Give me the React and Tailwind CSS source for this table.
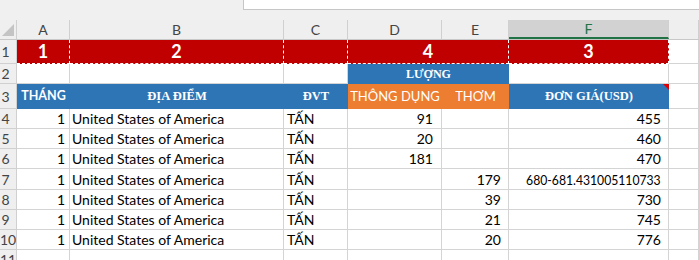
import React from 'react';

const sans = "font-['Lato','Liberation_Sans',sans-serif]";
const serif = "font-['Liberation_Serif','DejaVu_Serif',serif]";
const grid = 'border-r border-b border-[#d4d4d4]';

const cols = ['A', 'B', 'C', 'D', 'E', 'F', ''];

const rows = [
  { n: 4, d: '91', e: '', f: '455', h: 'h-[20px]' },
  { n: 5, d: '20', e: '', f: '460', h: 'h-[20px]' },
  { n: 6, d: '181', e: '', f: '470', h: 'h-[20px]' },
  { n: 7, d: '', e: '179', f: '680-681.431005110733', h: 'h-[21px]', long: true },
  { n: 8, d: '', e: '39', f: '730', h: 'h-[20px]' },
  { n: 9, d: '', e: '21', f: '745', h: 'h-[20px]' },
  { n: 10, d: '', e: '20', f: '776', h: 'h-[20px]' },
];

const RowNum = ({ n, h }) => (
  <div className={`${h} w-[17px] shrink-0 bg-[#efefef] border-r border-b border-[#d0d0d0] flex items-center text-[#444] text-[14px] overflow-hidden`}>
    <span className="w-[11px] text-center">{n}</span>
  </div>
);

export default function App() {
  return (
    <div className={`w-[699px] h-[260px] overflow-hidden bg-white text-[14px] text-black ${sans}`}>
      {/* formula bar strip */}
      <div className="h-[20px] bg-[#f0f0f0] flex">
        <div className="w-[243px]" />
        <div className="flex-1 h-[10px] bg-white border-l border-b border-[#c6c6c6]" />
      </div>

      {/* column headers */}
      <div className="flex h-[20px] bg-[#efefef] border-b border-[#c8c8c8] text-[#444] text-[14px]">
        <div className="w-[17px] border-r border-[#d0d0d0] relative">
          <svg className="absolute left-[2px] top-[4px]" width="12" height="12" viewBox="0 0 12 12">
            <polygon points="12,0 12,12 0,12" fill="#c4c4c4" />
          </svg>
        </div>
        {cols.map((c, i) => {
          const w = ['w-[53px]', 'w-[214px]', 'w-[64px]', 'w-[94px]', 'w-[67px]', 'w-[160px]', 'flex-1'][i];
          const sel = c === 'F';
          return (
            <div
              key={i}
              className={`${w} flex items-center justify-center border-r border-[#d0d0d0] ${sel ? 'bg-[#d2d2d2] text-[#217346] border-b-2 border-b-[#217346]' : ''}`}
            >
              {c}
            </div>
          );
        })}
      </div>

      {/* row 1 */}
      <div className="flex h-[24px]">
        <RowNum n={1} h="h-[24px]" />
        <div className="w-[53px] bg-[#c00000] border-r border-b border-dashed border-white flex items-center justify-center text-white font-bold text-[18px]">1</div>
        <div className="w-[214px] bg-[#c00000] border-r border-b border-dashed border-white flex items-center justify-center text-white font-bold text-[18px]">2</div>
        <div className="w-[64px] bg-[#c00000] border-r border-b border-dashed border-white" />
        <div className="w-[161px] bg-[#c00000] border-r border-b border-dashed border-white flex items-center justify-center text-white font-bold text-[18px]">4</div>
        <div className="w-[160px] bg-[#c00000] border-r border-b border-dashed border-white flex items-center justify-center text-white font-bold text-[18px]">3</div>
        <div className={`flex-1 ${grid}`} />
      </div>

      {/* row 2 */}
      <div className="flex h-[20px]">
        <RowNum n={2} h="h-[20px]" />
        <div className={`w-[53px] ${grid}`} />
        <div className={`w-[214px] ${grid}`} />
        <div className={`w-[64px] ${grid}`} />
        <div className={`w-[161px] bg-[#2e75b6] flex items-center justify-center text-white font-bold text-[12px] ${serif}`}>LƯỢNG</div>
        <div className={`w-[160px] ${grid}`} />
        <div className={`flex-1 ${grid}`} />
      </div>

      {/* row 3 */}
      <div className="flex h-[25px]">
        <RowNum n={3} h="h-[25px]" />
        <div className="w-[53px] bg-[#2e75b6] flex items-center justify-center text-white font-bold text-[12.5px]">THÁNG</div>
        <div className={`w-[214px] bg-[#2e75b6] flex items-center justify-center text-white font-bold text-[12.5px] ${serif}`}>ĐỊA ĐIỂM</div>
        <div className={`w-[64px] bg-[#2e75b6] flex items-center justify-center text-white font-bold text-[12.5px] ${serif}`}>ĐVT</div>
        <div className="w-[94px] bg-[#ed7d31] flex items-center justify-center text-white text-[13px] whitespace-nowrap">THÔNG DỤNG</div>
        <div className="w-[67px] bg-[#ed7d31] flex items-center justify-center text-white text-[13px]">THƠM</div>
        <div className={`w-[160px] bg-[#2e75b6] relative flex items-center justify-center text-white font-bold text-[12.5px] ${serif}`}>
          ĐƠN GIÁ(USD)
          <svg className="absolute right-0 top-0" width="6" height="6" viewBox="0 0 6 6">
            <polygon points="0,0 6,0 6,6" fill="#e00000" />
          </svg>
        </div>
        <div className={`flex-1 ${grid}`} />
      </div>

      {/* data rows */}
      {rows.map((r) => (
        <div key={r.n} className={`flex ${r.h}`}>
          <RowNum n={r.n} h={r.h} />
          <div className={`w-[53px] ${grid} flex items-center justify-end pr-[4px]`}>1</div>
          <div className={`w-[214px] ${grid} flex items-center pl-[2px] whitespace-nowrap`}>United States of America</div>
          <div className={`w-[64px] ${grid} flex items-center pl-[3px]`}>TẤN</div>
          <div className={`w-[94px] ${grid} flex items-center justify-end pr-[8px]`}>{r.d}</div>
          <div className={`w-[67px] ${grid} flex items-center justify-end pr-[7px]`}>{r.e}</div>
          <div className={`w-[160px] ${grid} flex items-center justify-end pr-[7px] whitespace-nowrap`}>
            <span className={r.long ? 'inline-block origin-right scale-x-[0.87]' : ''}>{r.f}</span>
          </div>
          <div className={`flex-1 ${grid}`} />
        </div>
      ))}

      {/* row 11 */}
      <div className="flex h-[20px]">
        <RowNum n={11} h="h-[20px]" />
        <div className={`w-[53px] ${grid}`} />
        <div className={`w-[214px] ${grid}`} />
        <div className={`w-[64px] ${grid}`} />
        <div className={`w-[94px] ${grid}`} />
        <div className={`w-[67px] ${grid}`} />
        <div className={`w-[160px] ${grid}`} />
        <div className={`flex-1 ${grid}`} />
      </div>
    </div>
  );
}
